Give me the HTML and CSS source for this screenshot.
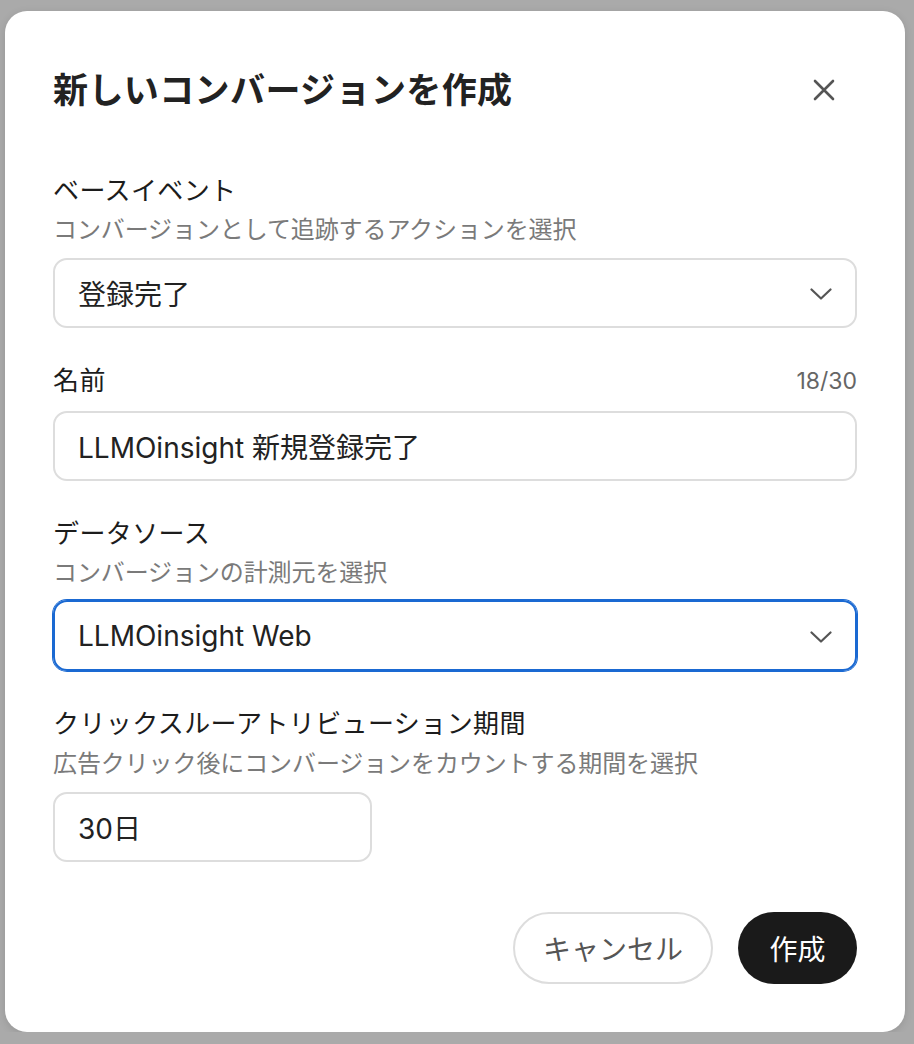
FILE: index.html
```html
<!DOCTYPE html>
<html lang="ja">
<head>
<meta charset="utf-8">
<title>新しいコンバージョンを作成</title>
<link rel="stylesheet" href="styles.css">
</head>
<body>
<div class="modal">
  <div class="header">
    <h1 class="title">新しいコンバージョンを作成</h1>
    <button class="close" aria-label="閉じる">
      <svg width="22" height="22" viewBox="0 0 22 22"><path d="M2 2 L20 20 M20 2 L2 20" stroke="#555" stroke-width="2.6" stroke-linecap="round" fill="none"/></svg>
    </button>
  </div>

  <div class="group">
    <div class="label">ベースイベント</div>
    <div class="sub">コンバージョンとして追跡するアクションを選択</div>
    <div class="field select">
      <span>登録完了</span>
      <svg class="chev" width="22" height="12" viewBox="0 0 22 12"><path d="M1.5 1.5 L11 10.5 L20.5 1.5" stroke="#555" stroke-width="2.2" stroke-linecap="round" stroke-linejoin="round" fill="none"/></svg>
    </div>
  </div>

  <div class="group">
    <div class="label-row">
      <div class="label">名前</div>
      <div class="count">18/30</div>
    </div>
    <div class="field input name">
      <span>LLMOinsight 新規登録完了</span>
    </div>
  </div>

  <div class="group">
    <div class="label">データソース</div>
    <div class="sub">コンバージョンの計測元を選択</div>
    <div class="field select focused">
      <span>LLMOinsight Web</span>
      <svg class="chev" width="22" height="12" viewBox="0 0 22 12"><path d="M1.5 1.5 L11 10.5 L20.5 1.5" stroke="#555" stroke-width="2.2" stroke-linecap="round" stroke-linejoin="round" fill="none"/></svg>
    </div>
  </div>

  <div class="group">
    <div class="label">クリックスルーアトリビューション期間</div>
    <div class="sub sub-last">広告クリック後にコンバージョンをカウントする期間を選択</div>
    <div class="field input short">
      <span>30日</span>
    </div>
  </div>

  <div class="actions">
    <button class="btn cancel">キャンセル</button>
    <button class="btn primary">作成</button>
  </div>
</div>
</body>
</html>
```

FILE: styles.css
```css
* { box-sizing: border-box; }

html, body {
  margin: 0;
  padding: 0;
  background: #aaaaaa;
}

body {
  padding: 11px 0 0 5px;
  font-family: "Inter", "Noto Sans CJK JP", sans-serif;
  color: #1c1c1c;
}

.modal {
  width: 900px;
  height: 1021px;
  background: #ffffff;
  border-radius: 22px;
  padding: 57px 48px 48px 48px;
  box-shadow: 0 2px 8px rgba(0, 0, 0, 0.12);
  display: flex;
  flex-direction: column;
}

.header {
  display: flex;
  align-items: center;
  justify-content: space-between;
  height: 44px;
}

.title {
  margin: 0;
  font-size: 35px;
  line-height: 44px;
  font-weight: 700;
  color: #222222;
  letter-spacing: 0.4px;
}

.close {
  border: 0;
  background: transparent;
  padding: 0;
  width: 22px;
  height: 22px;
  margin-right: 22px;
  display: flex;
  align-items: center;
  justify-content: center;
}

.group {
  display: flex;
  flex-direction: column;
  margin-top: 35px;
}

.header + .group {
  margin-top: 61px;
}

.label {
  font-size: 26px;
  line-height: 36px;
  color: #1c1c1c;
  letter-spacing: 0.4px;
}

.label-row {
  display: flex;
  justify-content: space-between;
  align-items: center;
}

.count {
  font-size: 23px;
  line-height: 36px;
  color: #666666;
}

.sub {
  margin-top: 4px;
  font-size: 24px;
  line-height: 34px;
  color: #7a7a7a;
  letter-spacing: -0.1px;
}

.sub-last {
  margin-top: 5px;
}

.field {
  margin-top: 11px;
  height: 70px;
  border: 2px solid #dddddd;
  border-radius: 14px;
  display: flex;
  align-items: center;
  justify-content: space-between;
  padding: 0 23px 0 23px;
  font-size: 28px;
  color: #222222;
}

.label-row + .field {
  margin-top: 12px;
}

.field.focused {
  margin-top: 10px;
  height: 71px;
  border-color: #1a69d2;
  box-shadow: 0 0 0 1px #1a69d2;
}

.chev {
  display: block;
  margin-top: 2px;
}

.field.short {
  width: 319px;
}

.actions {
  margin-top: auto;
  display: flex;
  justify-content: flex-end;
  gap: 25px;
}

.btn {
  height: 72px;
  border-radius: 36px;
  font-family: "Inter", "Noto Sans CJK JP", sans-serif;
  font-size: 28px;
  padding: 0;
  display: flex;
  align-items: center;
  justify-content: center;
}

.cancel {
  width: 200px;
  background: #ffffff;
  border: 2px solid #dddddd;
  color: #555555;
}

.primary {
  width: 119px;
  background: #1a1a1a;
  border: 0;
  color: #ffffff;
}
```
